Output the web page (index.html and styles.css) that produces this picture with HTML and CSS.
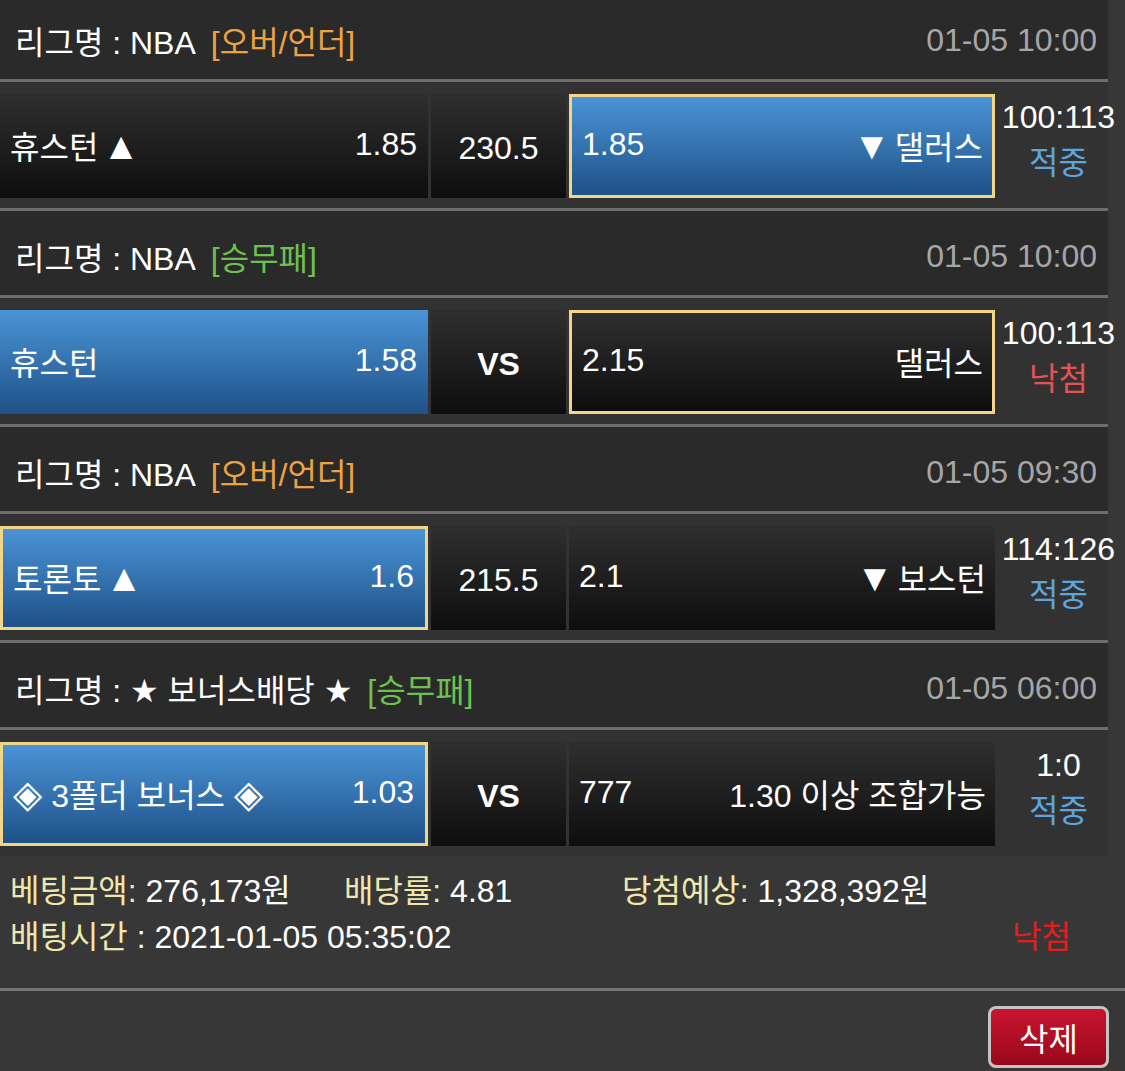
FILE: index.html
```html
<!DOCTYPE html>
<html lang="ko">
<head>
<meta charset="utf-8">
<title>배팅내역</title>
<link rel="stylesheet" href="styles.css">
</head>
<body>
<div class="list">
  <section class="game">
    <div class="league"><span>리그명 : NBA</span><span class="type ou">[오버/언더]</span><span class="date">01-05 10:00</span></div>
    <div class="match">
      <div class="cell home"><span>휴스턴<span class="sym after">▲</span></span><span>1.85</span></div>
      <div class="cell mid">230.5</div>
      <div class="cell away on pick"><span>1.85</span><span><span class="sym before">▼</span>댈러스</span></div>
      <div class="result"><div>100:113</div><div class="hit">적중</div></div>
    </div>
  </section>
  <section class="game">
    <div class="league"><span>리그명 : NBA</span><span class="type wdl">[승무패]</span><span class="date">01-05 10:00</span></div>
    <div class="match">
      <div class="cell home on"><span>휴스턴</span><span>1.58</span></div>
      <div class="cell mid vs">VS</div>
      <div class="cell away pick"><span>2.15</span><span>댈러스</span></div>
      <div class="result"><div>100:113</div><div class="miss">낙첨</div></div>
    </div>
  </section>
  <section class="game">
    <div class="league"><span>리그명 : NBA</span><span class="type ou">[오버/언더]</span><span class="date">01-05 09:30</span></div>
    <div class="match">
      <div class="cell home on pick"><span>토론토<span class="sym after">▲</span></span><span>1.6</span></div>
      <div class="cell mid">215.5</div>
      <div class="cell away"><span>2.1</span><span><span class="sym before">▼</span>보스턴</span></div>
      <div class="result"><div>114:126</div><div class="hit">적중</div></div>
    </div>
  </section>
  <section class="game">
    <div class="league"><span>리그명 : ★ 보너스배당 ★</span><span class="type wdl">[승무패]</span><span class="date">01-05 06:00</span></div>
    <div class="match">
      <div class="cell home on pick"><span><span class="dia">◈</span> 3폴더 보너스 <span class="dia">◈</span></span><span>1.03</span></div>
      <div class="cell mid vs">VS</div>
      <div class="cell away"><span>777</span><span>1.30 이상 조합가능</span></div>
      <div class="result"><div>1:0</div><div class="hit">적중</div></div>
    </div>
  </section>
</div>
<div class="info">
  <div class="info-row1">
    <div><span class="lbl">베팅금액:</span> 276,173원</div>
    <div><span class="lbl">배당률:</span> 4.81</div>
    <div><span class="lbl">당첨예상:</span> 1,328,392원</div>
  </div>
  <div class="info-row2">
    <div><span class="lbl">배팅시간</span> : 2021-01-05 05:35:02</div>
    <div class="lost">낙첨</div>
  </div>
</div>
<div class="actions">
  <button class="del" type="button">삭제</button>
</div>
</body>
</html>
```

FILE: styles.css
```css
html, body {
  margin: 0;
  background: #373737;
}
body {
  font-family: "Liberation Sans", "DejaVu Sans", "Noto Sans CJK KR", sans-serif;
  font-size: 32px;
  color: #ffffff;
  overflow: hidden;
}
.list {
  width: 1108px;
  margin-top: -8px;
}
.league {
  box-sizing: border-box;
  height: 90px;
  border-top: 3px solid #6d6d6d;
  border-bottom: 3px solid #6d6d6d;
  background: #2a2a2a;
  display: flex;
  align-items: center;
  padding: 6px 11px 0 15px;
  white-space: nowrap;
}
.league .type {
  margin-left: 15px;
}
.ou { color: #eea243; }
.wdl { color: #6cc24f; }
.date {
  margin-left: auto;
  color: #a6a6a6;
}
.match {
  display: flex;
  align-items: flex-start;
  gap: 3px;
  height: 104px;
  padding: 12px 0 10px;
  background: #323232;
}
.cell {
  box-sizing: border-box;
  height: 104px;
  display: flex;
  align-items: center;
  justify-content: space-between;
  padding-bottom: 3px;
  background: linear-gradient(#2f2f2f, #0e0e0e);
  white-space: nowrap;
  flex-shrink: 0;
}
.home {
  width: 428px;
  padding-left: 10px;
  padding-right: 11px;
}
.mid {
  width: 135px;
  justify-content: center;
  padding-top: 4px;
  padding-bottom: 0;
}
.away {
  width: 426px;
  padding-left: 10px;
  padding-right: 9px;
}
.on {
  background: linear-gradient(#4b94d7, #1e5187);
}
.pick {
  border: 3px solid #f3d58a;
}
.vs {
  font-weight: bold;
}
.sym {
  font-size: 38px;
  line-height: 1;
}
.sym.after {
  margin-left: 4px;
}
.sym.before {
  margin-right: 4px;
}
.dia {
  font-size: 38px;
  line-height: 1;
}
.result {
  width: 121px;
  flex-shrink: 0;
  text-align: center;
  line-height: 46px;
  white-space: nowrap;
}
.hit { color: #5ea4df; }
.miss { color: #e65252; }
.info {
  padding: 12px 54px 28px 10px;
  line-height: 46px;
  border-bottom: 3px solid #747474;
  white-space: nowrap;
}
.info-row1 {
  display: grid;
  grid-template-columns: 334px 278px auto;
}
.info-row2 {
  display: flex;
  justify-content: space-between;
}
.lbl { color: #efe7ab; }
.lost { color: #e41d1d; }
.actions {
  display: flex;
  justify-content: flex-end;
  padding: 15px 16px 0 0;
}
.del {
  box-sizing: border-box;
  width: 121px;
  height: 62px;
  padding: 0;
  border: 3px solid #c4c4c4;
  border-radius: 8px;
  background: linear-gradient(#c9142f, #98081c);
  color: #ffffff;
  font-family: inherit;
  font-size: 32px;
}
```
